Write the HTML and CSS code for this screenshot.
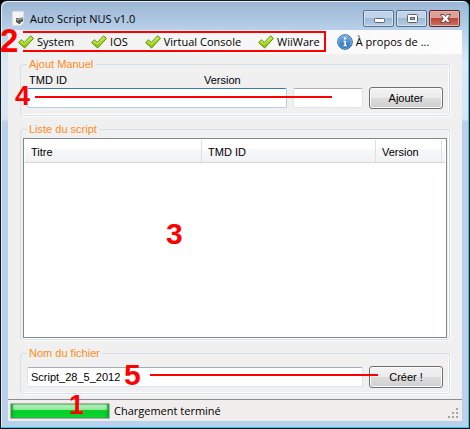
FILE: index.html
```html
<!DOCTYPE html>
<html lang="fr">
<head>
  <meta charset="UTF-8">
  <meta name="viewport" content="width=device-width, initial-scale=1.0">
  <title>Auto Script NUS v1.0</title>
  <link rel="stylesheet" href="styles.css">
</head>
<body>
  <svg class="defs" width="0" height="0" aria-hidden="true">
    <defs>
      <linearGradient id="green" x1="0" y1="0" x2="0" y2="1">
        <stop offset="0" stop-color="#c4ee3c"/>
        <stop offset="1" stop-color="#86c400"/>
      </linearGradient>
      <linearGradient id="blue" x1="0" y1="0" x2="0" y2="1">
        <stop offset="0" stop-color="#7db4e6"/>
        <stop offset="1" stop-color="#1c68b4"/>
      </linearGradient>
      <symbol id="check" viewBox="0 0 16 16">
        <path d="M0.600 8.500 L3.500 5.800 L6.300 8.500 L12.600 1.800 L15.500 4.400 L6.600 14 Z" fill="url(#green)" stroke="#5b8c14" stroke-linejoin="round"/>
        <path d="M2.300 8.300 L3.600 7.200 L6.300 9.900 L12.700 3.200" fill="none" stroke="#dff67c" stroke-width="0.8"/>
      </symbol>
    </defs>
  </svg>

  <div class="window">
    <header class="titlebar">
      <svg class="app-icon" viewBox="0 0 13 15">
        <path d="M0.500 0.500 H11.500 V11 L9 14.500 H0.500 Z" fill="#f4f4f4" stroke="#dcdcdc"/>
        <path d="M4 7 H11 V10 L8 13 H7 L4 11 Z" fill="#555"/>
        <path d="M4 8 L11 6 V8 L5 10 Z" fill="#999"/>
        <path d="M8 14 L9 11 H12 Z" fill="#fff"/>
      </svg>
      <h1>Auto Script NUS v1.0</h1>
      <div class="controls">
        <button class="control" aria-label="Réduire">
          <svg viewBox="0 0 28 15"><rect x="9.500" y="7.500" width="10" height="4" rx="1" fill="#fff" stroke="#5b6270"/></svg>
        </button>
        <button class="control" aria-label="Agrandir">
          <svg viewBox="0 0 28 15"><rect x="9.500" y="3.500" width="10" height="8" rx="1" fill="#fff" stroke="#5b6270"/><rect x="12.500" y="6.500" width="4" height="2" fill="#9db6d3" stroke="#5b6270"/></svg>
        </button>
        <button class="control close" aria-label="Fermer">
          <svg viewBox="0 0 28 15"><path d="M9.500 3.500 H13 L14.500 5.500 L16 3.500 H19.500 L16.700 7.500 L19.500 11.500 H16 L14.500 9.500 L13 11.500 H9.500 L12.300 7.500 Z" fill="#fff" stroke="#5c4148" stroke-width="0.9"/></svg>
        </button>
      </div>
    </header>

    <main class="content">
      <nav class="menu">
        <button><svg><use href="#check"/></svg>System</button>
        <button><svg><use href="#check"/></svg>IOS</button>
        <button><svg><use href="#check"/></svg>Virtual Console</button>
        <button><svg><use href="#check"/></svg>WiiWare</button>
        <button>
          <svg viewBox="0 0 16 16">
            <circle cx="8" cy="8" r="7.300" fill="url(#blue)" stroke="#2463a4"/>
            <circle cx="8" cy="8" r="6.400" fill="none" stroke="#a5cdf0" stroke-width="0.6"/>
            <circle cx="8" cy="4.400" r="1.200" fill="#fff"/>
            <path d="M6.500 6.700 H9 V11.300 H10 V12.300 H6.300 V11.300 H7.300 V7.700 H6.500 Z" fill="#fff"/>
          </svg>
          À propos de ...
        </button>
        <span class="mark mark-menu">2</span>
        <span class="frame-menu"></span>
      </nav>

      <form class="panels" onsubmit="return false">
        <fieldset class="manual">
          <legend>Ajout Manuel</legend>
          <div class="labels">
            <label for="tmd">TMD ID</label>
            <label for="version">Version</label>
          </div>
          <div class="row">
            <input type="text" id="tmd" class="active">
            <input type="text" id="version" class="short">
            <button class="action">Ajouter</button>
            <span class="mark mark-manual">4</span>
            <span class="line line-manual"></span>
          </div>
        </fieldset>

        <fieldset class="list">
          <legend>Liste du script</legend>
          <div class="listbox">
            <table>
              <thead>
                <tr>
                  <th class="col-title">Titre</th>
                  <th class="col-id">TMD ID</th>
                  <th class="col-version">Version</th>
                  <td></td>
                </tr>
              </thead>
            </table>
            <span class="mark mark-list">3</span>
          </div>
        </fieldset>

        <fieldset class="file">
          <legend><label for="filename">Nom du fichier</label></legend>
          <div class="row">
            <input type="text" id="filename" value="Script_28_5_2012">
            <button class="action">Créer !</button>
            <span class="mark mark-file">5</span>
            <span class="line line-file"></span>
          </div>
        </fieldset>
      </form>

      <footer class="status">
        <div class="progress" role="progressbar" aria-label="Chargement" aria-valuenow="100"></div>
        <span>Chargement terminé</span>
        <svg class="grip" viewBox="0 0 11 11" fill="#a5a3a3">
          <path d="M8 0h2v2h-2z M4 4h2v2h-2z M8 4h2v2h-2z M0 8h2v2h-2z M4 8h2v2h-2z M8 8h2v2h-2z"/>
        </svg>
        <span class="mark mark-status">1</span>
      </footer>
    </main>
  </div>
</body>
</html>
```

FILE: styles.css
```css
* {
  box-sizing: border-box;
}

body {
  margin: 0;
  background-color: #000;
  font-family: "Liberation Sans", Arial, sans-serif;
  font-size: 11px;
  line-height: 14px;
  color: #000;
}

button,
input {
  font: inherit;
  color: inherit;
  margin: 0;
}

.defs {
  position: absolute;
}

.window {
  display: flex;
  flex-direction: column;
  min-height: 100vh;
  padding: 0 6px 7px;
  border: 1px solid #15181c;
  border-radius: 7px 7px 0 0;
  background: linear-gradient(#9ab5d3, #b9d1ea 30px, #dce9f6 60px, #d7e6f5 118px, #b9d1ea 121px);
  box-shadow: inset -1px -1px #35c5e8, inset 1px 1px #e4eef8;
}

/* title bar */
.titlebar {
  display: flex;
  align-items: center;
  gap: 5px;
  height: 29px;
  padding: 6px 3px 0 5px;
}

.app-icon {
  width: 13px;
  height: 15px;
}

.titlebar h1 {
  flex: 1;
  margin: 0;
  font-family: "Open Sans", sans-serif;
  font-size: 11px;
  font-weight: normal;
}

.controls {
  display: flex;
  gap: 2px;
}

.control {
  width: 31px;
  height: 17px;
  padding: 0;
  border: 1px solid #56708f;
  border-radius: 2px;
  background: linear-gradient(#c0d3e8 50%, #9fb9d5 50%, #b7cde4);
  box-shadow: inset 0 0 0 1px #d3e1ef;
}

.control svg {
  display: block;
  height: 15px;
  margin: auto;
}

.control.close {
  border-color: #5c2730;
  background: linear-gradient(#dda094 50%, #bb4638 50%, #cb7462);
  box-shadow: inset 0 0 0 1px #e2b3ab;
}

.content {
  flex: 1;
  display: flex;
  flex-direction: column;
  margin: 0 1px;
  background-color: #f0f0f0;
}

/* menu */
.menu {
  position: relative;
  display: flex;
  gap: 17px;
  height: 24px;
  padding-left: 10px;
  background: linear-gradient(to right, #f0f0f0, #fdfdfd);
}

.menu button {
  display: flex;
  align-items: center;
  gap: 3px;
  padding: 0;
  border: none;
  background: none;
  font-family: "Open Sans", sans-serif;
  font-size: 11px;
  white-space: nowrap;
}

.menu button svg {
  width: 16px;
  height: 16px;
}

/* group boxes */
.panels {
  flex: 1;
  display: flex;
  flex-direction: column;
  gap: 6px;
  padding: 3px 12px 5px;
}

fieldset {
  min-width: 0;
  margin: 0;
  padding: 0 6px 5px;
  border: 1px solid #d5dfe5;
  border-radius: 3px;
  box-shadow: inset -1px -1px #fff, 1px 1px #fff;
}

legend {
  padding: 0 2px;
  color: #ff8c1a;
}

.labels {
  display: grid;
  grid-template-columns: 175px 1fr;
  padding: 2px 2px 0;
}

.manual {
  padding-bottom: 6px;
}

.file {
  padding-top: 6px;
}

.row {
  position: relative;
  display: flex;
  align-items: center;
  gap: 6px;
}

input {
  flex: 1;
  min-width: 0;
  height: 20px;
  padding: 0 3px;
  border: 1px solid #e2e3ea;
  border-top-color: #abadb3;
  border-radius: 2px;
  background-color: #fff;
}

input.active {
  border-color: #b5cfe7;
  border-top-color: #3d7bad;
}

input.short {
  flex: 0 0 70px;
}

.action {
  width: 74px;
  height: 22px;
  padding: 0;
  border: 1px solid #707070;
  border-radius: 3px;
  background: linear-gradient(#f2f2f2, #ebebeb 50%, #dddddd 50%, #cfcfcf);
  box-shadow: inset 0 0 0 1px #fbfbfb;
}

/* script list */
.list {
  padding: 0 2px 1px;
}

.list legend {
  margin-left: 4px;
}

/* takes the height that the bars and the other group boxes leave */
.listbox {
  position: relative;
  min-height: calc(100vh - 229px);
  margin-top: 2px;
  padding: 1px;
  border: 1px solid #828790;
  background-color: #fff;
}

table {
  width: 100%;
  table-layout: fixed;
  border-collapse: separate;
  border-spacing: 0;
}

th,
thead td {
  height: 23px;
  padding: 2px 6px 0;
  border-bottom: 1px solid #d5d5d5;
  background: linear-gradient(#fff 40%, #f7f8fa 40%, #f1f2f4);
  font-weight: normal;
  text-align: left;
}

th {
  border-right: 1px solid #dedfe1;
}

.col-title {
  width: 177px;
}

.col-id {
  width: 174px;
}

.col-version {
  width: 66px;
}

thead td {
  padding: 0;
}

/* status bar */
.status {
  position: relative;
  display: flex;
  align-items: center;
  gap: 4px;
  height: 22px;
  padding: 0 3px 0 2px;
  border-top: 1px solid #8e8e8e;
  background-color: #f1edec;
  font-family: "Open Sans", sans-serif;
}

.progress {
  width: 100px;
  height: 16px;
  border: 1px solid #a5b5a5;
  border-radius: 1px;
  background: linear-gradient(#c3f5c9, #8ce898 40%, #07ce28 45%, #05d229 80%, #23dc45);
  box-shadow: inset 2px 0 2px #1ea034, inset -2px 0 2px #1ea034;
}

.grip {
  width: 11px;
  height: 11px;
  margin: 5px 0 0 auto;
}

/* numbered callouts */
.mark {
  position: absolute;
  color: #f00;
  font-family: "Liberation Sans", Arial, sans-serif;
  font-weight: bold;
  line-height: 1;
}

.mark-menu {
  left: -8px;
  top: -6px;
  font-size: 33px;
}

.frame-menu {
  position: absolute;
  left: 15px;
  top: 1px;
  width: 303px;
  height: 21px;
  border: 2px solid #f00;
  border-left: none;
}

.mark-manual {
  left: -12px;
  top: -4px;
  font-size: 27px;
}

.mark-list {
  left: 142px;
  top: 80px;
  font-family: "Liberation Sans Narrow", "Liberation Sans", sans-serif;
  font-size: 30px;
}

.mark-file {
  left: 97px;
  top: -6px;
  font-size: 30px;
}

.mark-status {
  left: 61px;
  top: -8px;
  font-size: 27px;
}

.line {
  position: absolute;
  height: 2px;
  background-color: #f00;
}

.line-manual {
  left: 8px;
  right: 111px;
  top: 9px;
}

.line-file {
  left: 123px;
  right: 65px;
  top: 8px;
}
```
